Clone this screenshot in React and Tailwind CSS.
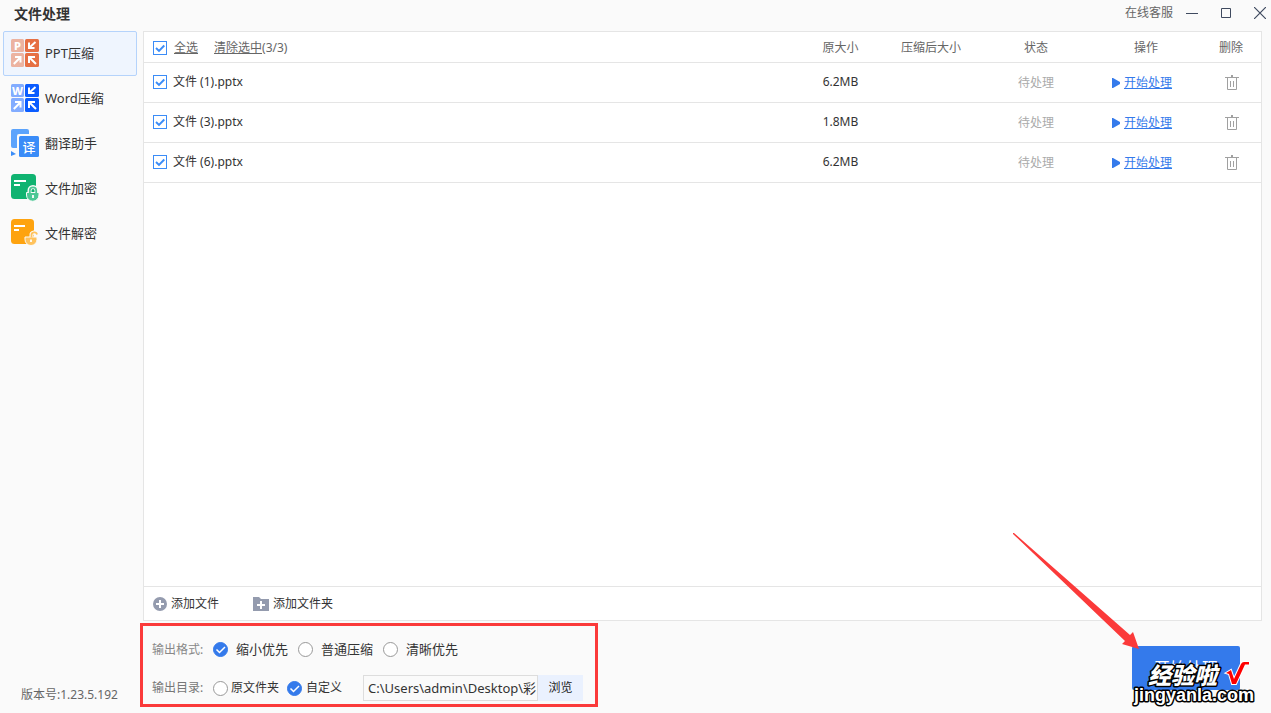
import { useState } from 'react';

const FONT = 'font-["Noto_Sans","Noto_Sans_CJK_SC",sans-serif]';

const FILES = [
  { id: 1, name: '文件 (1).pptx', size: '6.2MB' },
  { id: 3, name: '文件 (3).pptx', size: '1.8MB' },
  { id: 6, name: '文件 (6).pptx', size: '6.2MB' },
];

function CompressIcon({ letter, light, dark }) {
  return (
    <svg width="28" height="28" viewBox="0 0 28 28" overflow="visible" aria-hidden="true">
      <rect width="13" height="13" rx="1.5" fill={light} />
      <rect x="14" width="14" height="13" rx="1.5" fill={dark} />
      <rect y="14" width="13" height="14" rx="1.5" fill={light} />
      <rect x="14" y="14" width="14" height="14" rx="1.5" fill={dark} />
      <text x="6.5" y="10.5" textAnchor="middle" fontSize="11" fontWeight="800" fill="#fff">{letter}</text>
      <g stroke="#fff" strokeWidth="2" fill="none">
        <path d="M24.5 3 18.5 8.5M18 3.5V9H23.5" />
        <path d="M2.8 25 9 18.8M4 18H9.5V23.5" />
        <path d="M25 25 18.5 18.5M18 24V18H24" />
      </g>
    </svg>
  );
}

function TranslateIcon() {
  return (
    <svg width="28" height="28" viewBox="0 0 28 28" aria-hidden="true">
      <path d="M2 0H16a2 2 0 0 1 2 2V5H8a2 2 0 0 0-2 2V19H2a2 2 0 0 1-2-2V2a2 2 0 0 1 2-2Z" fill="#5ba3fc" />
      <path d="M0 22 5 25 0 27Z" fill="#3b8df8" />
      <rect x="8" y="7" width="20" height="21" rx="1.5" fill="#3a8cf8" />
      <text x="18" y="22.5" textAnchor="middle" fontSize="13" fontWeight="500" fill="#fff">译</text>
    </svg>
  );
}

function LockIcon({ main, badge, open }) {
  return (
    <svg width="28" height="28" viewBox="0 0 28 28" aria-hidden="true">
      <rect width={open ? 23 : 25} height="25" rx="3.5" fill={main} />
      <path d={open ? 'M3 6.9H14M3 11H8' : 'M3 6.9H15M3 11H9'} stroke="#fff" strokeWidth="2" />
      {open ? (
        <g>
          <path d="M20.5 18V16.5A2.8 2.8 0 0 1 26 15.5" fill="none" stroke="#fafafa" strokeWidth="4" />
          <path d="M14 18H26V20.5A6 6 0 0 1 14 20.5Z" fill={badge} stroke="#fafafa" strokeWidth="1" />
          <path d="M20.5 18.5V16.5A2.8 2.8 0 0 1 26 15.5" fill="none" stroke={badge} strokeWidth="1.8" />
          <path d="M20 20.5V23" stroke="#fff" strokeWidth="1.8" />
        </g>
      ) : (
        <g>
          <path d="M18.5 19V16.5A3.5 3.5 0 0 1 25.5 16.5V19" fill="none" stroke="#fafafa" strokeWidth="4" />
          <path d="M15.5 18.5H28V21A6.2 6.2 0 0 1 15.5 21Z" fill={badge} stroke="#fafafa" strokeWidth="1" />
          <path d="M18.8 19V16.5A3.1 3.1 0 0 1 25.2 16.5V19" fill="none" stroke={badge} strokeWidth="1.8" />
          <path d="M22 21V24" stroke="#fff" strokeWidth="1.8" />
        </g>
      )}
    </svg>
  );
}

const NAV = [
  { key: 'ppt', label: 'PPT压缩', icon: <CompressIcon letter="P" light="#ecb3a1" dark="#e66f43" /> },
  { key: 'word', label: 'Word压缩', icon: <CompressIcon letter="W" light="#82acff" dark="#0a5cff" /> },
  { key: 'translate', label: '翻译助手', icon: <TranslateIcon /> },
  { key: 'encrypt', label: '文件加密', icon: <LockIcon main="#10b371" badge="#4cc795" /> },
  { key: 'decrypt', label: '文件解密', icon: <LockIcon main="#fea30f" badge="#ffc25c" open /> },
];

function Checkbox({ label, checked, onChange }) {
  return (
    <span className="relative flex size-[14px] shrink-0">
      <input
        type="checkbox"
        aria-label={label}
        checked={checked}
        onChange={onChange}
        className="peer size-[14px] appearance-none border border-[#3b8cf7] bg-white"
      />
      <svg viewBox="0 0 14 14" className="pointer-events-none absolute inset-0 hidden peer-checked:block" aria-hidden="true">
        <path d="M3 7 6 10 11.3 4.5" fill="none" stroke="#3b8cf7" strokeWidth="1.9" />
      </svg>
    </span>
  );
}

function Radio({ name, label, checked, onChange, className }) {
  return (
    <label className={`flex items-center ${className}`}>
      <span className="relative flex size-[15px] shrink-0">
        <input
          type="radio"
          name={name}
          checked={checked}
          onChange={onChange}
          className="peer size-[15px] appearance-none rounded-full border border-[#999] bg-white checked:border-[#347aeb] checked:bg-[#347aeb]"
        />
        <svg viewBox="0 0 15 15" className="pointer-events-none absolute inset-0 hidden peer-checked:block" aria-hidden="true">
          <path d="M3.5 7.5 6.5 10.5 12 5" fill="none" stroke="#fff" strokeWidth="1.5" />
        </svg>
      </span>
      {label}
    </label>
  );
}

function TrashIcon() {
  return (
    <svg width="14" height="16" viewBox="0 0 14 16" fill="none" stroke="#a0a0a0" aria-hidden="true">
      <path d="M0 2.5H14M2.5 3V14.5H11.5V3M5.5 6V12M8.5 6V12" />
      <path d="M6 1H8" strokeWidth="2" />
    </svg>
  );
}

function TitleBar() {
  return (
    <header className="flex h-[31px] shrink-0 items-start justify-between pl-[14px] pr-[5px]">
      <h1 className="text-sm leading-[28px] font-bold text-[#333]">文件处理</h1>
      <div className="flex h-[26px] items-center text-xs text-[#666]">
        <button type="button" className="mr-[13px]">在线客服</button>
        <button type="button" aria-label="最小化" className="mr-[23px]">
          <svg width="12" height="12" viewBox="0 0 12 12" stroke="#3f4a5f"><path d="M0 6.5H12" /></svg>
        </button>
        <button type="button" aria-label="最大化" className="mr-[23px]">
          <svg width="10" height="10" viewBox="0 0 10 10" fill="none" stroke="#3f4a5f"><path d="M.5.5H9.5V9.5H.5Z" /></svg>
        </button>
        <button type="button" aria-label="关闭">
          <svg width="12" height="12" viewBox="0 0 12 12" stroke="#3f4a5f" strokeWidth="1.2"><path d="M0 0 12 12M12 0 0 12" /></svg>
        </button>
      </div>
    </header>
  );
}

function Sidebar({ active, onSelect }) {
  return (
    <aside className="flex w-[143px] shrink-0 flex-col justify-between">
      <nav className="flex flex-col pl-[3px] pr-[6px]">
        {NAV.map((item) => (
          <button
            key={item.key}
            type="button"
            onClick={() => onSelect(item.key)}
            className={`flex h-[45px] items-start gap-[6px] rounded-xs border pt-[7px] pl-[7px] text-[13px] leading-[28px] text-[#333] ${
              active === item.key ? 'border-[#b5d3fb] bg-[#eff5fe]' : 'border-transparent'
            }`}
          >
            {item.icon}
            {item.label}
          </button>
        ))}
      </nav>
      <p className="pb-2 pl-[21px] text-xs leading-[20px] text-[#666]">版本号:1.23.5.192</p>
    </aside>
  );
}

function FileTable({ selected, setSelected }) {
  const allSelected = selected.length === FILES.length;

  const toggle = (id) => {
    setSelected(selected.includes(id) ? selected.filter((s) => s !== id) : [...selected, id]);
  };
  const selectAll = () => setSelected(FILES.map((f) => f.id));
  const clear = () => setSelected([]);

  return (
    <table className="w-full table-fixed border-collapse text-xs text-[#333]">
      <thead>
        <tr className="h-[30px] border-b border-[#e5e5e5] text-[#666]">
          <th className="pt-[2px] pl-[9px] font-normal">
            <div className="flex items-center">
              <Checkbox label="全选" checked={allSelected} onChange={allSelected ? clear : selectAll} />
              <button type="button" onClick={selectAll} className="ml-[7px] underline">全选</button>
              <button type="button" onClick={clear} className="ml-4 underline">清除选中</button>
              <span>({selected.length}/{FILES.length})</span>
            </div>
          </th>
          <th className="w-[89px] pt-[2px] font-normal">原大小</th>
          <th className="w-[92px] pt-[2px] font-normal">压缩后大小</th>
          <th className="w-[118px] pt-[2px] font-normal">状态</th>
          <th className="w-[102px] pt-[2px] font-normal">操作</th>
          <th className="w-[64px] pt-[2px] pl-1 font-normal">删除</th>
        </tr>
      </thead>
      <tbody>
        {FILES.map((file) => (
          <tr key={file.id} className="h-[40px] border-b border-[#e5e5e5]">
            <td className="pl-[9px]">
              <label className="flex items-center gap-[6px]">
                <Checkbox label={file.name} checked={selected.includes(file.id)} onChange={() => toggle(file.id)} />
                {file.name}
              </label>
            </td>
            <td className="text-center">{file.size}</td>
            <td />
            <td className="pt-[2px] text-center text-[#aaa]">待处理</td>
            <td className="pt-[2px] pr-2">
              <button type="button" className="mx-auto flex items-center gap-1 text-[#347aeb]">
                <svg width="8" height="10" viewBox="0 0 8 10" fill="#347aeb" aria-hidden="true"><path d="M0 0H1L8 4V6L1 10H0Z" /></svg>
                <span className="underline">开始处理</span>
              </button>
            </td>
            <td className="pt-[2px] pl-[6px]">
              <button type="button" aria-label="删除" className="mx-auto block"><TrashIcon /></button>
            </td>
          </tr>
        ))}
      </tbody>
    </table>
  );
}

function AddBar() {
  return (
    <div className="flex h-[34px] shrink-0 items-center border-t border-[#e5e5e5] pl-[9px] text-xs text-[#333]">
      <button type="button" className="flex items-center gap-1">
        <svg width="14" height="14" viewBox="0 0 14 14" aria-hidden="true">
          <circle cx="7" cy="7" r="7" fill="#949bae" />
          <path d="M3 7H11M7 3V11" stroke="#fff" strokeWidth="2" />
        </svg>
        添加文件
      </button>
      <button type="button" className="ml-[34px] flex items-center gap-1">
        <svg width="16" height="14" viewBox="0 0 16 14" aria-hidden="true">
          <path d="M0 0H6L8 2H16V14H0Z" fill="#949bae" />
          <path d="M4 8H12M8 4V12" stroke="#fff" strokeWidth="2" />
        </svg>
        添加文件夹
      </button>
    </div>
  );
}

function OutputOptions() {
  const [mode, setMode] = useState('small');
  const [dir, setDir] = useState('custom');
  const [path, setPath] = useState('C:\\Users\\admin\\Desktop\\彩');

  return (
    <form className="-ml-[3px] mt-[2px] w-fit border-3 border-[#fb3a3a] pr-3 pb-[3px] pl-[9px] text-[#333]">
      <div role="radiogroup" aria-label="输出格式" className="flex h-[49px] items-center gap-[10px] pb-[2px] text-[13px]">
        <span className="w-[51px] text-xs whitespace-nowrap text-[#888]">输出格式:</span>
        <Radio name="mode" label="缩小优先" className="gap-2" checked={mode === 'small'} onChange={() => setMode('small')} />
        <Radio name="mode" label="普通压缩" className="gap-2" checked={mode === 'normal'} onChange={() => setMode('normal')} />
        <Radio name="mode" label="清晰优先" className="gap-2" checked={mode === 'clear'} onChange={() => setMode('clear')} />
      </div>
      <div role="radiogroup" aria-label="输出目录" className="flex h-[26px] items-center gap-2 text-xs">
        <span className="w-[53px] whitespace-nowrap text-[#777]">输出目录:</span>
        <Radio name="dir" label="原文件夹" className="gap-[3px]" checked={dir === 'source'} onChange={() => setDir('source')} />
        <Radio name="dir" label="自定义" className="gap-1" checked={dir === 'custom'} onChange={() => setDir('custom')} />
        <div className="ml-[13px] flex h-full">
          <input
            type="text"
            aria-label="输出路径"
            value={path}
            onChange={(e) => setPath(e.target.value)}
            className="w-[175px] border border-[#ddd] bg-[#fafafa] pt-[2px] pl-1 text-[13px]"
          />
          <button type="button" className="w-[45px] bg-[#eaf1fe] text-[#222]">浏览</button>
        </div>
      </div>
    </form>
  );
}

function Watermark() {
  return (
    <svg width="130" height="48" viewBox="0 0 130 48" className="pointer-events-none absolute -right-4 -bottom-[18px]" aria-hidden="true">
      <g fill="#fff" stroke="#000" strokeLinejoin="round" paintOrder="stroke">
        <text x="22" y="24" fontSize="23" fontWeight="900" fontStyle="italic" strokeWidth="3">经验啦</text>
        <text x="8" y="41" fontSize="18" fontWeight="700" strokeWidth="3" className='font-["Liberation_Sans",sans-serif]'>jingyanla.com</text>
      </g>
      <path
        d="M100 13 105 10 108 19 115 4Q116 2 118 2H123V4.5H119L110 24H106L103 14Z"
        fill="#f00"
        stroke="#fff"
        strokeWidth="2"
        paintOrder="stroke"
      />
    </svg>
  );
}

export default function App() {
  const [active, setActive] = useState('ppt');
  const [selected, setSelected] = useState(FILES.map((f) => f.id));

  return (
    <div className={`flex h-screen flex-col overflow-hidden bg-[#fafafa] ${FONT}`}>
      <TitleBar />
      <div className="flex min-h-0 flex-1">
        <Sidebar active={active} onSelect={setActive} />
        <main className="flex min-w-0 flex-1 flex-col pr-[9px]">
          <section className="flex min-h-0 flex-1 flex-col border border-[#e5e5e5] bg-white">
            <div className="min-h-0 flex-1">
              <FileTable selected={selected} setSelected={setSelected} />
            </div>
            <AddBar />
          </section>
          <footer className="flex h-[92px] shrink-0 items-start justify-between">
            <OutputOptions />
            <div className="relative mt-[25px] mr-[22px]">
              <button type="button" className="h-[44px] w-[108px] rounded-xs bg-[#347aeb] text-base text-white">开始处理</button>
              <svg width="128" height="116" viewBox="0 0 128 116" className="pointer-events-none absolute -top-[113px] -left-[120px]" aria-hidden="true">
                <path d="M1 0H2L118 102 121 99 127 116 110 111 113 108 1 1Z" fill="#fb3a3a" />
              </svg>
              <Watermark />
            </div>
          </footer>
        </main>
      </div>
    </div>
  );
}
